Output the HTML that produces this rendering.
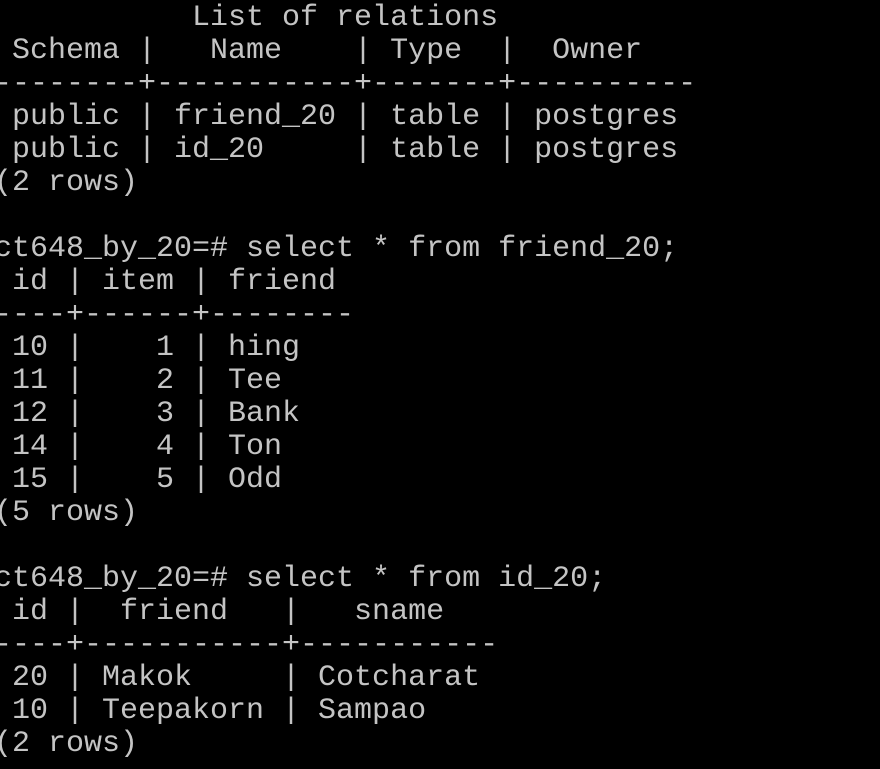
<!DOCTYPE html>
<html><head><meta charset="utf-8"><style>
html,body{margin:0;padding:0;background:#000;width:880px;height:769px;overflow:hidden}
pre{margin:0;position:absolute;left:-6px;top:2px;font-family:"Liberation Mono","Courier New",monospace;font-size:30px;line-height:33px;color:#c4c4c4;white-space:pre}
</style></head><body><pre>           List of relations
 Schema |   Name    | Type  |  Owner
--------+-----------+-------+----------
 public | friend_20 | table | postgres
 public | id_20     | table | postgres
(2 rows)

ct648_by_20=# select * from friend_20;
 id | item | friend
----+------+--------
 10 |    1 | hing
 11 |    2 | Tee
 12 |    3 | Bank
 14 |    4 | Ton
 15 |    5 | Odd
(5 rows)

ct648_by_20=# select * from id_20;
 id |  friend   |   sname
----+-----------+-----------
 20 | Makok     | Cotcharat
 10 | Teepakorn | Sampao
(2 rows)</pre></body></html>
